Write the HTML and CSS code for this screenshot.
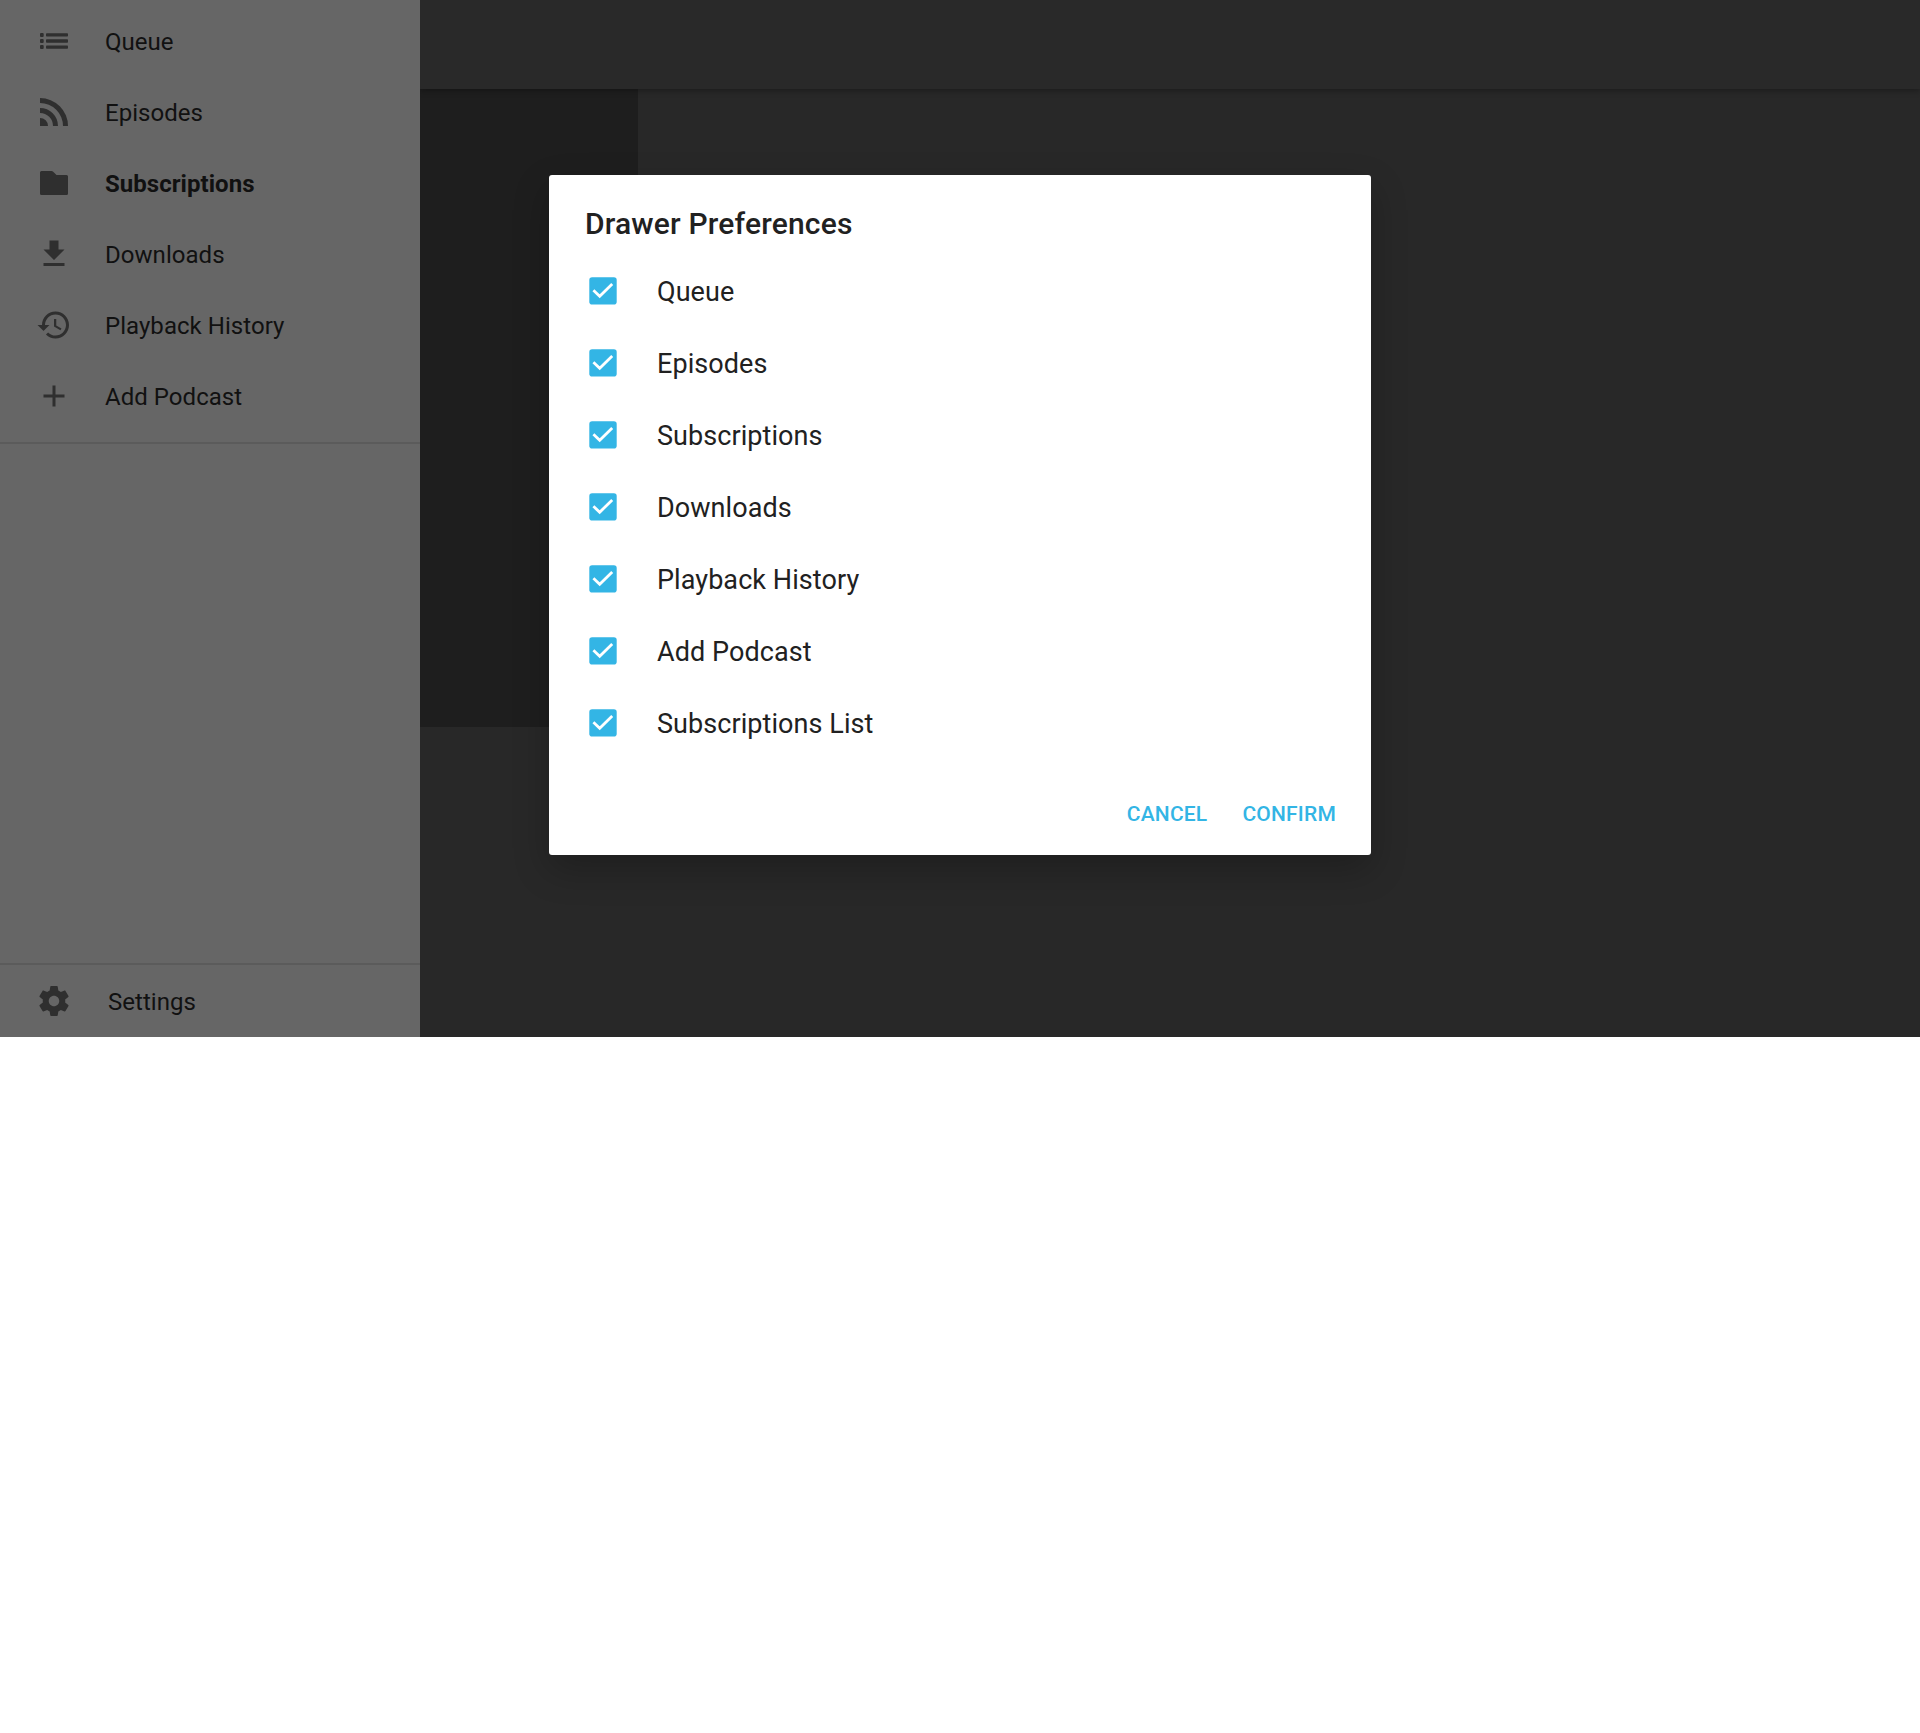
FILE: index.html
```html
<!DOCTYPE html>
<html lang="en">
<head>
<meta charset="utf-8">
<title>Drawer Preferences</title>
<link rel="stylesheet" href="styles.css">
</head>
<body>
<div class="screen">
  <nav class="drawer">
    <ul class="nav-list">
      <li class="nav-item"><svg class="icon" viewBox="0 0 36 36"><rect x="4" y="10" width="3.700" height="4" rx="1"/><rect x="4" y="16" width="3.700" height="4" rx="1"/><rect x="4" y="22" width="3.700" height="4" rx="1"/><rect x="10" y="10.200" width="22" height="3.400" rx=".8"/><rect x="10" y="16.300" width="22" height="3.400" rx=".8"/><rect x="10" y="22.400" width="22" height="3.400" rx=".8"/></svg><span>Queue</span></li>
      <li class="nav-item"><svg class="icon" viewBox="0 0 36 36"><path d="M4 4A28 28 0 0 1 32 32H27A23 23 0 0 0 4 9zM4 14A18 18 0 0 1 22 32H17A13 13 0 0 0 4 19zM4 24A8 8 0 0 1 12 32H4z"/></svg><span>Episodes</span></li>
      <li class="nav-item selected"><svg class="icon" viewBox="0 0 36 36"><path d="M5.500 6H15.500Q16.500 6 17.200 6.700L20.500 10H30.500Q32 10 32 11.500V28.500Q32 30 30.500 30H5.500Q4 30 4 28.500V7.500Q4 6 5.500 6z"/></svg><span>Subscriptions</span></li>
      <li class="nav-item"><svg class="icon" viewBox="0 0 24 24"><path d="M19 9h-4V3H9v6H5l7 7 7-7zM5 18v2h14v-2H5z"/></svg><span>Downloads</span></li>
      <li class="nav-item"><svg class="icon" viewBox="0 0 24 24"><path d="M13 3c-4.970 0-9 4.030-9 9H1l3.890 3.890.070.140L9 12H6c0-3.870 3.130-7 7-7s7 3.130 7 7-3.130 7-7 7c-1.930 0-3.680-.790-4.940-2.060l-1.420 1.420C8.270 19.990 10.510 21 13 21c4.970 0 9-4.030 9-9s-4.030-9-9-9zm-1 5v5l4.280 2.540.720-1.210-3.500-2.080V8H12z"/></svg><span>Playback History</span></li>
      <li class="nav-item"><svg class="icon" viewBox="0 0 24 24"><path d="M19 13h-6v6h-2v-6H5v-2h6V5h2v6h6v2z"/></svg><span>Add Podcast</span></li>
    </ul>
    <div class="nav-item settings"><svg class="icon" viewBox="0 0 24 24"><path d="M19.430 12.980c.040-.320.070-.640.070-.980s-.030-.660-.070-.980l2.110-1.650c.190-.150.240-.420.120-.640l-2-3.460c-.120-.220-.390-.300-.610-.220l-2.490 1c-.520-.400-1.080-.730-1.690-.980l-.380-2.650C14.460 2.180 14.250 2 14 2h-4c-.250 0-.460.180-.490.420l-.380 2.650c-.610.250-1.170.590-1.690.980l-2.490-1c-.230-.090-.490 0-.610.220l-2 3.460c-.130.220-.070.490.120.640l2.110 1.650c-.040.320-.070.650-.070.980s.030.660.070.980l-2.110 1.650c-.190.150-.240.420-.120.640l2 3.460c.120.220.390.300.610.220l2.490-1c.520.400 1.080.730 1.690.980l.380 2.650c.030.240.240.420.490.420h4c.250 0 .460-.180.490-.420l.380-2.650c.610-.250 1.170-.590 1.690-.980l2.490 1c.230.090.490 0 .610-.220l2-3.460c.120-.220.070-.490-.120-.640l-2.110-1.650zM12 15.500c-1.930 0-3.500-1.570-3.500-3.500s1.570-3.500 3.500-3.500 3.500 1.570 3.500 3.500-1.570 3.500-3.500 3.500z"/></svg><span>Settings</span></div>
  </nav>
  <main class="content">
    <div class="toolbar"></div>
    <div class="cover"></div>
  </main>
  <div class="overlay">
    <section class="dialog" role="dialog" aria-labelledby="dialog-title">
      <h1 class="dialog-title" id="dialog-title">Drawer Preferences</h1>
      <ul class="options">
        <li class="option"><svg class="check" viewBox="0 0 28 28"><rect x=".3" y=".2" width="27.400" height="27.400" rx="2.800"/><path d="M4.400 13.300 10.700 19.200 23.200 7"/></svg><span>Queue</span></li>
        <li class="option"><svg class="check" viewBox="0 0 28 28"><rect x=".3" y=".2" width="27.400" height="27.400" rx="2.800"/><path d="M4.400 13.300 10.700 19.200 23.200 7"/></svg><span>Episodes</span></li>
        <li class="option"><svg class="check" viewBox="0 0 28 28"><rect x=".3" y=".2" width="27.400" height="27.400" rx="2.800"/><path d="M4.400 13.300 10.700 19.200 23.200 7"/></svg><span>Subscriptions</span></li>
        <li class="option"><svg class="check" viewBox="0 0 28 28"><rect x=".3" y=".2" width="27.400" height="27.400" rx="2.800"/><path d="M4.400 13.300 10.700 19.200 23.200 7"/></svg><span>Downloads</span></li>
        <li class="option"><svg class="check" viewBox="0 0 28 28"><rect x=".3" y=".2" width="27.400" height="27.400" rx="2.800"/><path d="M4.400 13.300 10.700 19.200 23.200 7"/></svg><span>Playback History</span></li>
        <li class="option"><svg class="check" viewBox="0 0 28 28"><rect x=".3" y=".2" width="27.400" height="27.400" rx="2.800"/><path d="M4.400 13.300 10.700 19.200 23.200 7"/></svg><span>Add Podcast</span></li>
        <li class="option"><svg class="check" viewBox="0 0 28 28"><rect x=".3" y=".2" width="27.400" height="27.400" rx="2.800"/><path d="M4.400 13.300 10.700 19.200 23.200 7"/></svg><span>Subscriptions List</span></li>
      </ul>
      <div class="actions">
        <button class="action" type="button">CANCEL</button>
        <button class="action" type="button">CONFIRM</button>
      </div>
    </section>
  </div>
</div>
</body>
</html>
```
FILE: styles.css
```css
* { box-sizing: border-box; }
body {
  margin: 0;
  background: #fff;
  font-family: Roboto, "Liberation Sans", sans-serif;
}
ul { list-style: none; margin: 0; padding: 0; }
.screen {
  position: relative;
  display: flex;
  height: 1037px;
  overflow: hidden;
}
.drawer {
  display: flex;
  flex-direction: column;
  justify-content: space-between;
  width: 420px;
  background: #666;
  color: #111;
}
.nav-list {
  padding: 6px 0 10px;
  border-bottom: 2px solid #5b5b5b;
}
.nav-item {
  display: flex;
  align-items: center;
  gap: 33px;
  height: 71px;
  padding-left: 36px;
  font-size: 24px;
  line-height: 36px;
  letter-spacing: .04px;
}
.selected { font-weight: 700; }
.icon {
  width: 36px;
  height: 36px;
  margin-bottom: 1px;
  fill: #2f2f2f;
}
.settings {
  gap: 36px;
  height: 74px;
  border-top: 2px solid #5b5b5b;
}
.settings .icon { margin-bottom: 0; }
.settings span { padding-top: 2px; }
.content {
  flex: 1;
  overflow: hidden;
  background: #282828;
}
.toolbar {
  position: relative;
  height: 89px;
  background: #292929;
  box-shadow: 0 2px 6px rgba(0, 0, 0, .3);
}
.cover {
  width: 218px;
  height: 638px;
  background: #1e1e1e;
}
.overlay {
  position: absolute;
  inset: 0;
  display: flex;
  justify-content: center;
  align-items: flex-start;
  padding-top: 175px;
}
.dialog {
  width: 822px;
  height: 680px;
  padding: 30px 35px 0 36px;
  border-radius: 3px;
  background: #fff;
  color: #212121;
  box-shadow: 0 14px 36px rgba(0, 0, 0, .24);
}
.dialog-title {
  margin: 0 0 12px;
  font-size: 30px;
  font-weight: 500;
  line-height: 38px;
  letter-spacing: .18px;
}
.option {
  display: flex;
  align-items: center;
  gap: 40px;
  height: 72px;
  padding-left: 4px;
  font-size: 27px;
  line-height: 36px;
  letter-spacing: .07px;
}
.option span { padding-top: 2px; }
.check {
  width: 28px;
  height: 28px;
  fill: #33b5e5;
}
.check path {
  fill: none;
  stroke: #fff;
  stroke-width: 2.8;
}
.actions {
  display: flex;
  justify-content: flex-end;
  gap: 35px;
  margin-top: 37px;
}
.action {
  padding: 0;
  border: 0;
  background: none;
  color: #33b5e5;
  font: 500 21px/36px Roboto, "Liberation Sans", sans-serif;
  letter-spacing: .2px;
}
```
